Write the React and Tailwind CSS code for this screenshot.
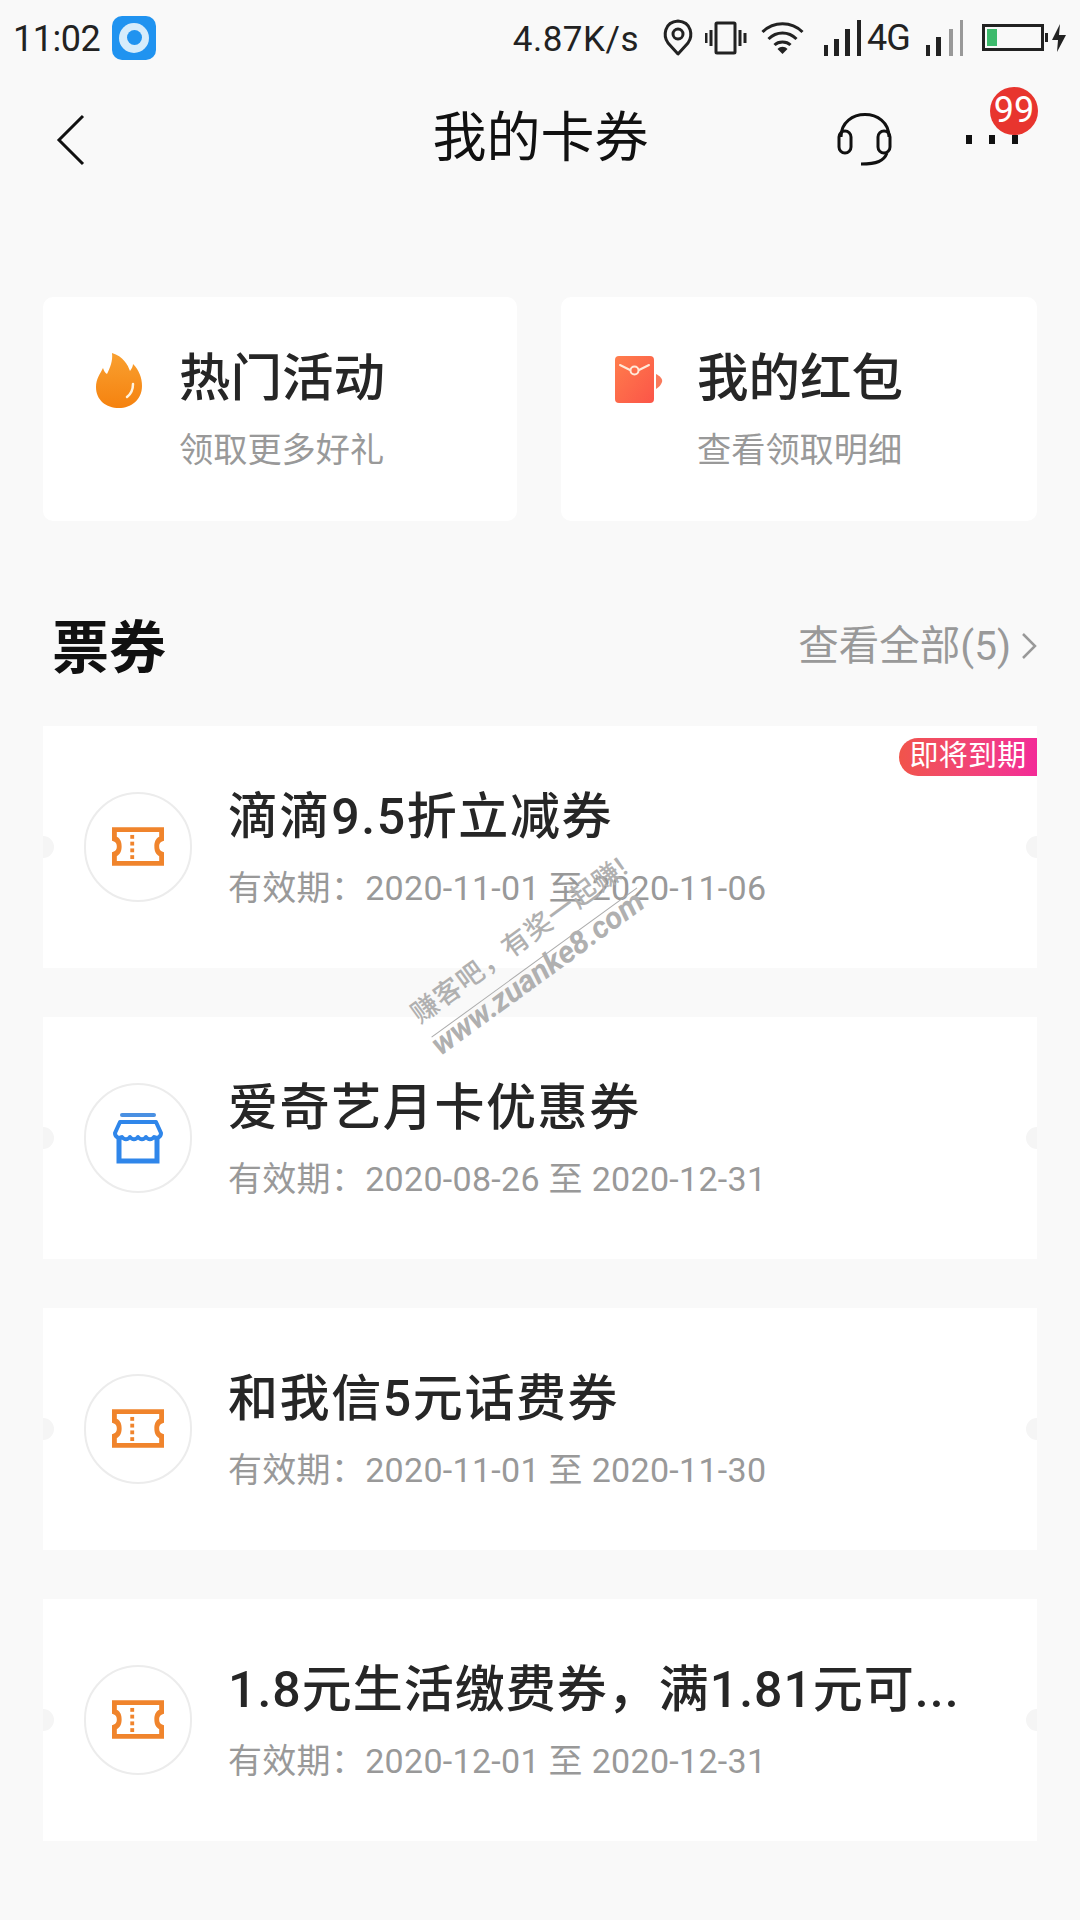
import React from "react";

const fontStack = "font-['Roboto','Noto_Sans_CJK_SC',sans-serif]";

const TicketIcon = () => (
  <svg width="52" height="39" viewBox="0 0 54 40">
    <path
      fillRule="evenodd"
      fill="#f0842c"
      d="M0 0H54V14C50 15 49 17 49 20C49 23 50 25 54 26V40H0V26C4 25 5 23 5 20C5 17 4 15 0 14ZM5 5V10C9 12 10 16 10 20C10 24 9 28 5 30V35H49V30C45 28 44 24 44 20C44 16 45 12 49 10V5Z"
    />
    <rect x="19" y="8" width="4" height="4" fill="#f0842c" />
    <rect x="19" y="15" width="4" height="4" fill="#f0842c" />
    <rect x="19" y="22" width="4" height="4" fill="#f0842c" />
    <rect x="19" y="29" width="4" height="4" fill="#f0842c" />
  </svg>
);

const ShopIcon = () => (
  <svg width="52" height="52" viewBox="0 0 52 52">
    <rect x="8" y="1" width="36" height="4" rx="2" fill="#4a90e2" />
    <path
      d="M8 10H44L49 21C49 25 45 27 42 25C40 28 36 28 34 25C32 28 28 28 26 25C24 28 20 28 18 25C16 28 12 28 10 25C7 27 3 25 3 21Z"
      fill="none"
      stroke="#2f86ea"
      strokeWidth="4"
      strokeLinejoin="round"
    />
    <path d="M7 26V49H45V26" fill="none" stroke="#2f86ea" strokeWidth="5" />
  </svg>
);

const coupons = [
  { title: "滴滴9.5折立减券", start: "2020-11-01", end: "2020-11-06", icon: "ticket", expiring: true, spacing: "tracking-[1.6px]" },
  { title: "爱奇艺月卡优惠券", start: "2020-08-26", end: "2020-12-31", icon: "shop", spacing: "tracking-[1.6px]" },
  { title: "和我信5元话费券", start: "2020-11-01", end: "2020-11-30", icon: "ticket", spacing: "tracking-[1.6px]" },
  { title: "1.8元生活缴费券，满1.81元可...", start: "2020-12-01", end: "2020-12-31", icon: "ticket", spacing: "tracking-[1px]" },
];

const StatusBar = () => (
  <div className="h-[70px] flex items-center justify-between pl-[13px] pr-[13px] pt-[5px] text-[#222]">
    <div className="flex items-center gap-[12px]">
      <span className="text-[36px] leading-none tracking-[-0.5px] mt-[3px]">11:02</span>
      <div className="w-[44px] h-[44px] rounded-[10px] bg-[#2093f0] flex items-center justify-center">
        <div className="w-[30px] h-[30px] rounded-full bg-[#d6ecfb] flex items-center justify-center">
          <div className="w-[15px] h-[15px] rounded-full bg-[#2093f0]" />
        </div>
      </div>
    </div>
    <div className="flex items-center">
      <span className="text-[35px] leading-none tracking-[0.5px] mr-[23px] mt-[3px]">4.87K/s</span>
      <svg width="32" height="38" viewBox="0 0 32 38" className="mr-[11px]">
        <path d="M16 35L6 24C1 17 2 3 16 2C30 3 31 17 26 24Z" fill="none" stroke="#222" strokeWidth="3" strokeLinejoin="round" />
        <circle cx="16" cy="15" r="5" fill="none" stroke="#222" strokeWidth="3" />
      </svg>
      <svg width="42" height="34" viewBox="0 0 42 34" className="mr-[13px]">
        <rect x="11" y="2" width="19" height="30" rx="1" fill="none" stroke="#222" strokeWidth="3" />
        <path d="M6 9V25M1 12V22M35 9V25M40 12V22" stroke="#222" strokeWidth="3" />
      </svg>
      <svg width="45" height="34" viewBox="0 0 44 34" className="mr-[19px]">
        <path d="M2 11C13 0 31 0 42 11M8 18C16 10 28 10 36 18M14 24C18 20 26 20 30 24" fill="none" stroke="#222" strokeWidth="3" />
        <path d="M22 33L17 28C20 25 24 25 27 28Z" fill="#222" />
      </svg>
      <svg width="38" height="36" viewBox="0 0 38 36">
        <rect x="0" y="25" width="4" height="11" fill="#222" />
        <rect x="10" y="19" width="5" height="17" fill="#222" />
        <rect x="21" y="9" width="5" height="27" fill="#222" />
        <rect x="33" y="0" width="4" height="36" fill="#222" />
      </svg>
      <span className="w-[42px] text-[36px] leading-none ml-[5px] mr-[17px] tracking-[-1px] whitespace-nowrap">4G</span>
      <svg width="38" height="36" viewBox="0 0 38 36" className="mr-[18px]">
        <rect x="0" y="25" width="4" height="11" fill="#222" />
        <rect x="10" y="17" width="5" height="19" fill="#222" />
        <rect x="23" y="9" width="4" height="27" fill="#999" />
        <rect x="34" y="0" width="3" height="36" fill="#999" />
      </svg>
      <div className="relative w-[62px] h-[27px] border-[3px] border-[#222] flex items-center pl-[2px]">
        <div className="w-[10px] h-[17px] bg-[#3dba6c]" />
      </div>
      <svg width="22" height="30" viewBox="0 0 22 30" className="ml-[1px]">
        <rect x="0" y="10" width="3" height="9" fill="#222" />
        <path d="M15 1L7 17H13L12 29L21 12H14Z" fill="#222" />
      </svg>
    </div>
  </div>
);

const NavBar = () => (
  <div className="h-[140px] relative flex items-center justify-center">
    <svg width="30" height="52" viewBox="0 0 30 52" className="absolute left-[56px] top-[44px]">
      <path d="M27 2L3 26L27 50" fill="none" stroke="#111" strokeWidth="3" />
    </svg>
    <h1 className="text-[54px] leading-none font-normal text-[#111] mt-[-2px] mr-[-1px]">我的卡券</h1>
    <svg width="56" height="56" viewBox="0 0 56 56" className="absolute left-[837px] top-[41px]">
      <path d="M4 26C4 -4 52 -4 52 26" fill="none" stroke="#111" strokeWidth="3" />
      <rect x="2" y="20" width="12" height="22" rx="6" fill="none" stroke="#111" strokeWidth="3" />
      <rect x="41" y="20" width="12" height="22" rx="6" fill="none" stroke="#111" strokeWidth="3" />
      <path d="M50 42C47 50 40 53 24 53" fill="none" stroke="#111" strokeWidth="3" />
    </svg>
    <div className="absolute left-[966px] top-[65px] flex gap-[17px]">
      <div className="w-[6px] h-[9px] bg-[#111]" />
      <div className="w-[6px] h-[9px] bg-[#111]" />
      <div className="w-[6px] h-[9px] bg-[#111]" />
    </div>
    <div className="absolute left-[990px] top-[17px] w-[48px] h-[48px] rounded-full bg-[#e8352e] text-white text-[36px] leading-[47px] text-center">
      99
    </div>
  </div>
);

const QuickCard = ({ icon, title, sub, className }) => (
  <div className={`h-[224px] bg-white rounded-[10px] flex items-start ${className}`}>
    <div className="w-[136px] flex pl-[52px] pt-[56px] shrink-0">{icon}</div>
    <div className="flex flex-col pt-[52px]">
      <span className="text-[51.5px] leading-[60px] font-medium text-[#262626]">{title}</span>
      <span className="text-[34.2px] leading-[40px] mt-[21px] text-[#999]">{sub}</span>
    </div>
  </div>
);

const CouponCard = ({ coupon }) => (
  <div className="relative h-[242px] bg-white flex items-center pl-[41px]">
    <div className="absolute left-0 top-[110px] w-[11px] h-[22px] rounded-r-full bg-[#f5f5f5]" />
    <div className="absolute right-0 top-[110px] w-[11px] h-[22px] rounded-l-full bg-[#f5f5f5]" />
    <div className="w-[108px] h-[110px] rounded-full border-2 border-[#ececec] flex items-center justify-center shrink-0 mt-[-1px]">
      {coupon.icon === "ticket" ? <TicketIcon /> : <ShopIcon />}
    </div>
    <div className="flex flex-col ml-[36px] mt-[1px]">
      <span className={`text-[50px] leading-[60px] font-medium text-[#262626] whitespace-nowrap ${coupon.spacing}`}>
        {coupon.title}
      </span>
      <span className="text-[34px] leading-[40px] mt-[21px] text-[#999] tracking-[0.3px] whitespace-nowrap">
        有效期：{coupon.start} 至 {coupon.end}
      </span>
    </div>
    {coupon.expiring && (
      <div className="absolute right-0 top-[12px] h-[38px] w-[138px] rounded-l-full bg-gradient-to-r from-[#f1544a] to-[#f32a97] text-white text-[29px] leading-[36px] text-center tracking-[0.3px]">
        即将到期
      </div>
    )}
  </div>
);

export default function App() {
  return (
    <div className={`relative w-[1080px] h-[1920px] overflow-hidden bg-[#f9f9f9] ${fontStack}`}>
      <StatusBar />
      <NavBar />

      <div className="flex gap-[44px] pl-[43px] pr-[43px] mt-[87px]">
        <QuickCard
          className="w-[474px]"
          title="热门活动"
          sub="领取更多好礼"
          icon={
            <svg width="48" height="56" viewBox="0 0 48 56">
              <defs>
                <linearGradient id="flame" x1="0" y1="0" x2="0" y2="1">
                  <stop offset="0" stopColor="#f9a030" />
                  <stop offset="1" stopColor="#f5820f" />
                </linearGradient>
              </defs>
              <path d="M17 0C28 3 33 12 35 18C37 15 38 13 38 11C44 17 47 25 47 33C47 47 36 55 24 55C11 55 1 47 1 34C1 26 5 21 8 15C9 18 10 20 12 21C15 15 18 8 17 0Z" fill="url(#flame)" />
              <path d="M38 31C38 36 36 41 32 44" fill="none" stroke="#fff3df" strokeWidth="2.5" strokeLinecap="round" />
            </svg>
          }
        />
        <QuickCard
          className="w-[476px]"
          title="我的红包"
          sub="查看领取明细"
          icon={
            <svg width="48" height="50" viewBox="0 0 48 50" className="mt-[2px] ml-[2px]">
              <defs>
                <linearGradient id="packet" x1="0" y1="0" x2="1" y2="1">
                  <stop offset="0" stopColor="#ff7d4c" />
                  <stop offset="1" stopColor="#fb5548" />
                </linearGradient>
              </defs>
              <rect x="0" y="1" width="39" height="47" rx="4" fill="url(#packet)" />
              <path d="M5 10L15 15M34 10L24 15" stroke="#ffe9d8" strokeWidth="2" strokeLinecap="round" />
              <circle cx="19.5" cy="15.5" r="4" fill="none" stroke="#ffe9d8" strokeWidth="2" />
              <path d="M41 19C45 21 48 24 47 27C46 30 44 32 41 34Z" fill="#f97a5c" />
            </svg>
          }
        />
      </div>

      <div className="flex items-center justify-between pl-[52px] pr-[43px] mt-[92px] h-[66px]">
        <span className="text-[57px] leading-none font-bold text-[#111] mt-[5px]">票券</span>
        <div className="flex items-center text-[#999]">
          <span className="text-[40.5px] leading-none">查看全部(5)</span>
          <svg width="16" height="28" viewBox="0 0 16 28" className="ml-[10px]">
            <path d="M2 2L14 14L2 26" fill="none" stroke="#999" strokeWidth="2.5" />
          </svg>
        </div>
      </div>

      <div className="flex flex-col gap-[49px] px-[43px] mt-[47px]">
        {coupons.map((coupon) => (
          <CouponCard key={coupon.title} coupon={coupon} />
        ))}
      </div>

      {/* forum watermark stamped over the first card */}
      <div className="absolute left-[405px] top-[1004px] -rotate-[36deg] origin-top-left text-[#b0b0b0]">
        <div className="text-[27px] leading-[32px] tracking-[1px] mb-[10px] whitespace-nowrap font-medium">
          赚客吧，有奖一起赚!
        </div>
        <div className="w-[254px] ml-[2px] border-b border-[#aaa]" />
        <div className="text-[31px] leading-[34px] mt-[-7px] ml-[-2px] font-bold italic whitespace-nowrap">www.zuanke8.com</div>
      </div>
    </div>
  );
}
